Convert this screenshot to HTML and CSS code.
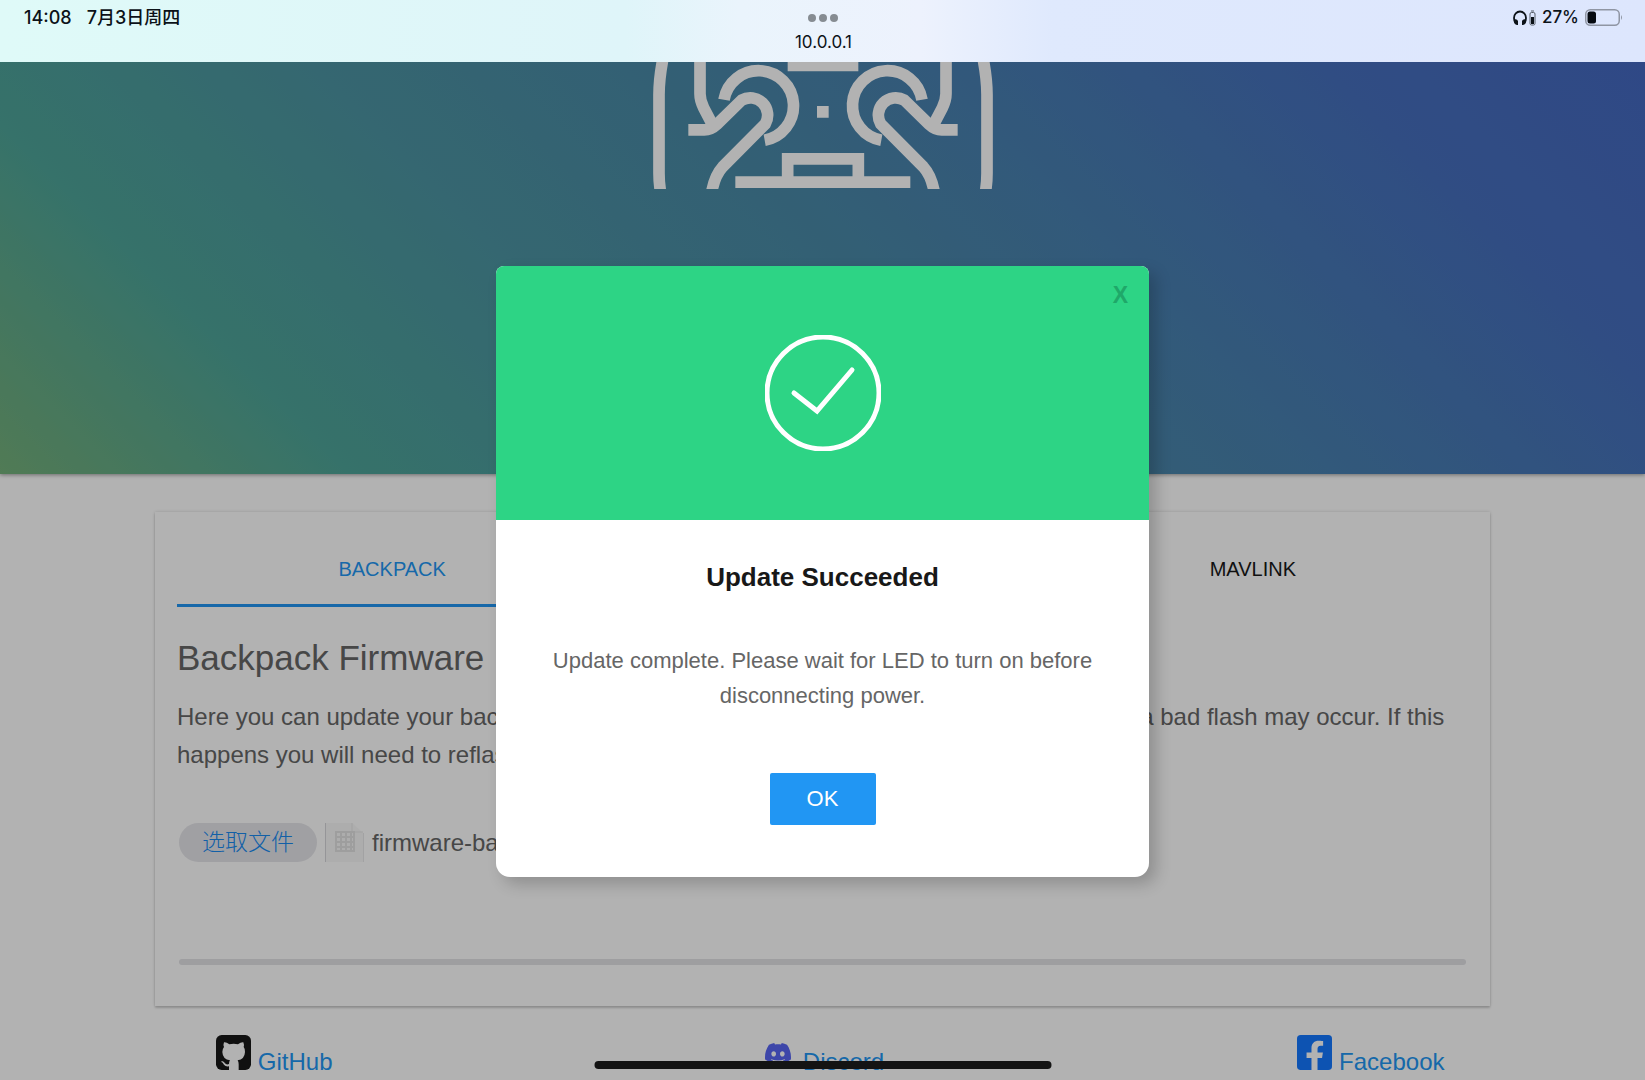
FILE: index.html
```
<!DOCTYPE html>
<html lang="en">
<head>
    <meta charset="UTF-8">
    <meta name="viewport" content="width=device-width, initial-scale=1.0">
    <title>Backpack Firmware Update</title>
    <link rel="stylesheet" href="styles.css">
</head>
<body>
    <!-- Tablet status bar -->
    <div class="status-bar">
        <div class="status-left">
            <span>14:08</span>
            <span lang="zh-CN">7月3日周四</span>
        </div>
        <div class="status-center">
            <svg class="dots" viewBox="0 0 30 8" aria-hidden="true">
                <circle cx="4" cy="4" r="4"/><circle cx="15" cy="4" r="4"/><circle cx="26" cy="4" r="4"/>
            </svg>
            <span>10.0.0.1</span>
        </div>
        <div class="status-right">
            <svg class="headphones" viewBox="0 0 23 16" aria-hidden="true">
                <path d="M2.500 13Q1 11 1 8A6 6.500 0 0 1 13 8Q13 11 11.500 13" fill="none" stroke="#0c1218" stroke-width="1.800"/>
                <path d="M1 9.500Q4 8.500 5 11V15Q2 15.500 1 12zM13 9.500Q10 8.500 9 11V15Q12 15.500 13 12z" fill="#0c1218"/>
                <rect x="17" y="2.500" width="5" height="12.500" rx="1.500" fill="none" stroke="#555c66"/>
                <rect x="18" y="7" width="3" height="7" fill="#0c1218"/>
                <path d="M18 1h3" stroke="#555c66"/>
            </svg>
            <span>27%</span>
            <svg class="battery" viewBox="0 0 38 17" aria-hidden="true">
                <rect x=".75" y=".75" width="33.500" height="15.500" rx="4.500" fill="none" stroke="#8f95a3" stroke-width="1.500"/>
                <rect x="2.500" y="2.500" width="8.500" height="12" rx="2.500" fill="#060a10"/>
                <path d="M36 6q2 2.500 0 5z" fill="#8f95a3"/>
            </svg>
        </div>
    </div>

    <main class="page">
        <header class="elrs-header">
            <svg class="elrs-logo" viewBox="62 187 1032 380" aria-hidden="true">
                <g id="half-logo">
                    <path d="M99 170Q86 235 86 285V520Q86 548 90 572"/>
                    <path d="M209 170V282Q209 302 220 324L243 368"/>
                    <path d="M174 390H222Q242 390 260 373L334 301A52 52 0 0 1 405 372L277 501Q254 526 245 572"/>
                    <path d="M281 300A105 105 0 1 1 403 421"/>
                </g>
                <use href="#half-logo" transform="translate(1156 0) scale(-1 1)"/>
                <path d="M472 197H684M560 336H595M315 547H840M472 530V477H684V530"/>
            </svg>
        </header>

        <section class="panel">
            <nav class="tabs">
                <a class="tab active" href="#backpack">BACKPACK</a>
                <a class="tab" href="#wifi">WIFI</a>
                <a class="tab" href="#mavlink">MAVLINK</a>
            </nav>
            <h2>Backpack Firmware Update</h2>
            <p>Here you can update your backpack firmware. Be careful to upload the right file, otherwise a bad flash may occur. If this happens you will need to reflash via USB/Serial.</p>
            <div class="file-row">
                <input type="file" id="firmware" class="file-input">
                <label for="firmware" class="file-button" lang="zh-CN">选取文件</label>
                <svg class="file-icon" viewBox="0 0 39 39" aria-hidden="true">
                    <path d="M1 0H27L38 10V39H1z" fill="#f8f8f8"/>
                    <path d="M.5 0V39" stroke="#d6d6da"/>
                    <path d="M38.500 10V39" stroke="#e8e8ea"/>
                    <path d="M27 0V9H38" fill="none" stroke="#e8e8e8"/>
                    <path d="M11 9H29V28H11zM11 14H29M11 19H29M11 24H29M16 9V28M21 9V28M26 9V28" fill="none" stroke="#e2e2e2" stroke-width="2"/>
                </svg>
                <span>firmware-backpack.bin</span>
            </div>
            <progress value="0" max="100" aria-label="Upload progress"></progress>
        </section>

        <footer class="links">
            <a href="#github">
                <svg class="icon-square" viewBox="0 0 105 105" aria-hidden="true">
                    <rect width="105" height="105" rx="17" fill="#181818"/>
                    <path d="M24 22Q31 21 40 28Q53 25 66 28Q75 21 82 22Q85 29 83 36Q88 42 87 51Q86 73 65 76Q68 80 68 88V105H39V94Q29 96 24 89Q20 82 16 81Q14 78 20 79Q24 80 27 85Q31 90 39 87Q39 80 42 76Q20 73 19 51Q19 42 24 36Q21 29 24 22Z" fill="#fff"/>
                </svg>
                GitHub
            </a>
            <a href="#discord">
                <svg class="icon-discord" viewBox="0 0 24 24" aria-hidden="true">
                    <path fill="#5865f2" d="M20.317 4.370a19.791 19.791 0 00-4.885-1.515.074.074 0 00-.079.037c-.211.375-.445.865-.608 1.250-1.845-.276-3.680-.276-5.487 0-.164-.393-.406-.874-.618-1.250a.077.077 0 00-.079-.037 19.736 19.736 0 00-4.885 1.515.070.070 0 00-.032.028C.533 9.046-.319 13.580.099 18.058a.082.082 0 00.031.056c2.053 1.508 4.041 2.423 5.993 3.029a.078.078 0 00.084-.028c.462-.630.873-1.295 1.226-1.994a.076.076 0 00-.042-.106c-.653-.248-1.274-.550-1.872-.892a.077.077 0 01-.008-.128c.126-.094.252-.192.372-.291a.074.074 0 01.078-.011c3.928 1.793 8.180 1.793 12.061 0a.074.074 0 01.079.010c.120.099.246.198.373.292a.077.077 0 01-.007.128 12.299 12.299 0 01-1.873.891.077.077 0 00-.041.107c.360.698.772 1.363 1.225 1.993a.076.076 0 00.084.029c1.961-.607 3.950-1.522 6.002-3.029a.077.077 0 00.031-.055c.500-5.177-.838-9.674-3.549-13.660a.061.061 0 00-.031-.029zM8.020 15.331c-1.183 0-2.157-1.086-2.157-2.419 0-1.333.956-2.419 2.157-2.419 1.211 0 2.176 1.095 2.157 2.419 0 1.333-.956 2.419-2.157 2.419zm7.975 0c-1.183 0-2.157-1.086-2.157-2.419 0-1.333.955-2.419 2.157-2.419 1.211 0 2.176 1.095 2.157 2.419 0 1.333-.946 2.419-2.157 2.419z"/>
                </svg>
                Discord
            </a>
            <a href="#facebook">
                <svg class="icon-square" viewBox="0 32 448 448" aria-hidden="true">
                    <path fill="#1477ff" d="M400 32H48A48 48 0 0 0 0 80v352a48 48 0 0 0 48 48h137.250V327.690h-63V256h63v-54.640c0-62.150 37-96.480 93.670-96.480 27.140 0 55.520 4.840 55.520 4.840v61h-31.270c-30.810 0-40.420 19.120-40.420 38.730V256h68.780l-11 71.690h-57.780V480H400a48 48 0 0 0 48-48V80a48 48 0 0 0-48-48z"/>
                </svg>
                Facebook
            </a>
        </footer>

        <!-- Result dialog -->
        <div class="overlay">
            <div class="dialog" role="dialog" aria-labelledby="dialog-title">
                <div class="dialog-header">
                    <button class="dialog-close" type="button" aria-label="Close">X</button>
                    <svg class="check" viewBox="0 0 116 116" aria-hidden="true">
                        <circle cx="58" cy="58" r="56"/>
                        <path d="M29 58L52 76L87 35"/>
                    </svg>
                </div>
                <div class="dialog-body">
                    <h3 id="dialog-title">Update Succeeded</h3>
                    <p>Update complete. Please wait for LED to turn on before disconnecting power.</p>
                    <button class="dialog-ok" type="button">OK</button>
                </div>
            </div>
        </div>
    </main>

    <div class="home-indicator"></div>
</body>
</html>
```
FILE: styles.css
```
* {
    box-sizing: border-box;
}

body {
    margin: 0;
    height: 100vh;
    overflow: hidden;
    display: flex;
    flex-direction: column;
    background: #fff;
    color: #666;
    font-family: "Liberation Sans", "Noto Sans CJK SC", Arial, sans-serif;
    font-size: 24px;
}

a {
    color: #2196f3;
    text-decoration: none;
}

/* Status bar */
.status-bar {
    flex: none;
    display: grid;
    grid-template-columns: 1fr auto 1fr;
    height: 62px;
    padding: 7px 22px 0 24px;
    background: linear-gradient(90deg, #dffaf8 0%, #dff5f9 38%, #eaf4fc 45%, #edf2fd 56%, #dfe9fd 64%, #dde6fd 100%);
    color: #0c1218;
    font-family: Inter, "Noto Sans CJK SC", sans-serif;
    font-size: 17px;
    font-weight: 500;
    line-height: 21px;
}

.status-left,
.status-right {
    display: flex;
    align-items: center;
    height: 21px;
    gap: 15px;
}

.status-left {
    font-size: 18px;
}

.status-right {
    justify-content: flex-end;
    gap: 6px;
}

.status-center {
    display: flex;
    flex-direction: column;
    align-items: center;
    gap: 10px;
    padding-top: 7px;
    font-weight: 400;
}

.dots {
    width: 30px;
    height: 8px;
    fill: #868c92;
}

.headphones {
    width: 23px;
    height: 16px;
}

.battery {
    width: 38px;
    height: 17px;
}

/* Page */
.page {
    position: relative;
    flex: 1;
    min-height: 0;
    overflow: hidden;
}

.elrs-header {
    display: flex;
    justify-content: center;
    align-items: flex-start;
    height: 412px;
    background: linear-gradient(45deg, #74b07a 0%, #4ea498 17%, #4c94a2 35%, #4a8aa6 50%, #4880b0 65%, #466fbc 84%, #4468c0 100%);
    box-shadow: 0 1px 4px rgba(0, 0, 0, 0.4);
}

.elrs-logo {
    width: 344px;
    height: 127px;
    fill: none;
    stroke: #fff;
    stroke-width: 35;
}

.panel {
    margin: 38px 155px 0;
    padding: 22px;
    height: 494px;
    background: #fff;
    box-shadow: 0 2px 2px rgba(0, 0, 0, 0.16), 0 0 3px rgba(0, 0, 0, 0.16);
}

.tabs {
    display: grid;
    grid-template-columns: repeat(3, 1fr);
}

.tab {
    height: 73px;
    border-bottom: 3px solid transparent;
    color: #181818;
    font-size: 20px;
    line-height: 70px;
    text-align: center;
}

.tab.active {
    color: #2196f3;
    border-color: #2196f3;
}

.panel h2 {
    margin: 31px 0 20px;
    font-size: 35px;
    font-weight: 400;
    line-height: 40px;
}

.panel p {
    margin: 0;
    line-height: 38px;
}

.file-row {
    display: flex;
    align-items: center;
    gap: 8px;
    margin-top: 49px;
    padding-left: 2px;
}

.file-input {
    position: absolute;
    width: 1px;
    height: 1px;
    opacity: 0;
}

.file-button {
    padding: 0 23px;
    border-radius: 20px;
    background: #e6e6ea;
    color: #1a8af0;
    font-size: 23px;
    font-weight: 300;
    line-height: 39px;
}

.file-icon {
    width: 39px;
    height: 39px;
}

.panel progress {
    display: block;
    appearance: none;
    width: calc(100% - 4px);
    height: 6px;
    margin: 97px 2px 0;
    border: 0;
    border-radius: 3px;
    overflow: hidden;
}

.panel progress::-webkit-progress-bar {
    background: #e2e2e6;
}

.links {
    display: grid;
    grid-template-columns: repeat(3, 1fr);
    margin-top: 29px;
}

.links a {
    display: flex;
    justify-content: center;
    height: 35px;
    gap: 7px;
    line-height: 54px;
}

.icon-square {
    width: 35px;
    height: 35px;
}

.icon-discord {
    width: 26px;
    height: 26px;
    margin: 5px 5px 0 4px;
}

/* Dialog */
.overlay {
    position: absolute;
    inset: 0;
    display: flex;
    justify-content: center;
    align-items: flex-start;
    padding-top: 204px;
    background: rgba(0, 0, 0, 0.3);
}

.dialog {
    width: 653px;
    border-radius: 8px 8px 14px 14px;
    overflow: hidden;
    background: #fff;
    box-shadow: 7px 7px 16px rgba(0, 0, 0, 0.2);
    text-align: center;
}

.dialog-header {
    position: relative;
    padding: 69px 0;
    background: #2dd485;
}

.dialog-close {
    position: absolute;
    top: 12px;
    right: 13px;
    padding: 4px 8px;
    border: 0;
    background: none;
    color: #1fa869;
    font: bold 23px "Liberation Sans", Arial, sans-serif;
}

.check {
    display: block;
    width: 116px;
    height: 116px;
    margin: 0 auto;
    fill: none;
    stroke: #fff;
    stroke-width: 5;
    stroke-linecap: round;
}

.dialog-body {
    padding: 41px 52px 52px;
    font-size: 22px;
}

.dialog-body h3 {
    margin: 0 0 50px;
    color: #181818;
    font-size: 26px;
    line-height: 32px;
}

.dialog-body p {
    margin: 0 0 60px;
    line-height: 35px;
}

.dialog-ok {
    width: 106px;
    height: 52px;
    border: 0;
    border-radius: 2px;
    background: #2196f3;
    color: #fff;
    font: 22px "Liberation Sans", Arial, sans-serif;
}

.home-indicator {
    position: fixed;
    bottom: 11px;
    left: 50%;
    width: 457px;
    height: 8px;
    border-radius: 4px;
    background: #141414;
    transform: translateX(-50%);
}
```
